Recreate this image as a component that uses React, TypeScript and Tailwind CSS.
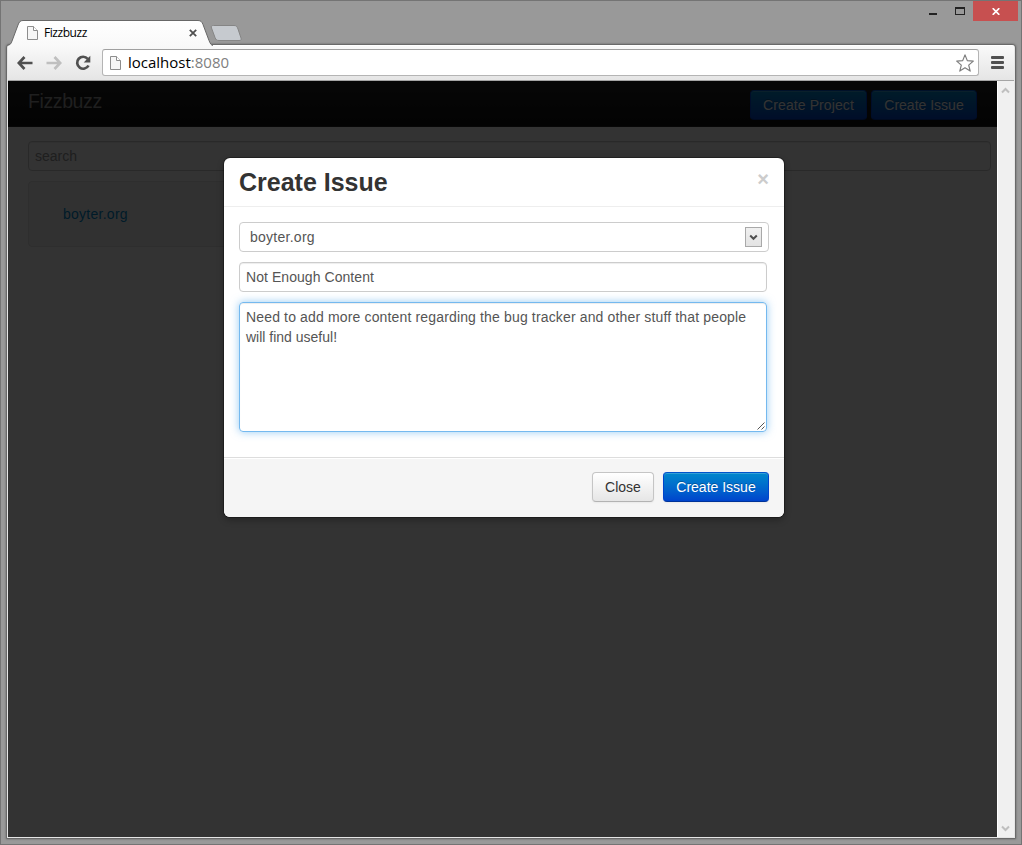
import React from "react";

const primary =
  "h-[30px] rounded-[4px] border border-[#0044cc] border-t-[#0055cc] border-b-[#003399] bg-gradient-to-b from-[#0088cc] to-[#0044cc] text-center text-[14px] leading-[28px] text-white shadow-[inset_0_1px_0_rgba(255,255,255,0.2),0_1px_2px_rgba(0,0,0,0.05)] [text-shadow:0_-1px_0_rgba(0,0,0,0.25)]";

function PageIcon() {
  return (
    <svg width="11" height="14" viewBox="0 0 11 14" className="shrink-0">
      <path d="M.5.5h6l4 4v9H.5z" fill="#f6f6f6" stroke="#8d8d8d" />
      <path d="M6.500.5v4h4" fill="#fff" stroke="#8d8d8d" />
    </svg>
  );
}

function TitleBar() {
  return (
    <header className="flex h-[44px] justify-between">
      <div className="flex pt-[19px] pl-[6px]">
        <div className="relative h-[26px] w-[206px]">
          <svg width="206" height="26" viewBox="0 0 206 26" className="absolute inset-0">
            <defs>
              <linearGradient id="tab" x1="0" y1="0" x2="0" y2="1">
                <stop offset="0" stopColor="#fff" />
                <stop offset="1" stopColor="#f9f9f9" />
              </linearGradient>
            </defs>
            <path
              d="M0 25.500C3 25 4 24 5 21L11 5C12.200 2 13 .5 16 .5H191C194 .5 195 2 196 4.500L202 20.500C203.500 24 204 25 206 25.500V26H0Z"
              fill="url(#tab)"
            />
            <path
              d="M0 25.500C3 25 4 24 5 21L11 5C12.200 2 13 .5 16 .5H191C194 .5 195 2 196 4.500L202 20.500C203.500 24 204 25 206 25.500"
              fill="none"
              stroke="#686868"
            />
          </svg>
          <div className="relative flex h-full items-center pr-[16px] pl-[20px]">
            <PageIcon />
            <span className="ml-[6px] flex-1 font-['Open_Sans',sans-serif] text-[12px] leading-[16px] tracking-[-0.45px] text-black">
              Fizzbuzz
            </span>
            <svg width="8" height="8" viewBox="0 0 8 8">
              <path d="M.8.8l6.400 6.400M7.200.8L.8 7.200" stroke="#505050" strokeWidth="1.800" />
            </svg>
          </div>
        </div>
        <svg width="32" height="17" viewBox="0 0 32 17" className="mt-[5px] -ml-[3px]">
          <path
            d="M3.500.5H24C26.500.5 27 1.500 28 4L31 13C31.700 15 31 15.500 29 15.500H9C7 15.500 6 15 5 12.500L1.500 3C.8 1 1.500.5 3.500.5Z"
            fill="#c6cacf"
            stroke="#858585"
          />
        </svg>
      </div>
      <div className="flex pr-[3px]">
        <span className="mt-[12px] h-[2px] w-[8px] bg-[#222]" />
        <span className="mt-[6px] ml-[18px] h-[8px] w-[10px] border border-t-2 border-[#222]" />
        <span className="ml-[8px] flex h-[20px] w-[45px] items-center justify-center bg-[#c75050]">
          <svg width="8" height="7" viewBox="0 0 8 7">
            <path d="M.7.2l6.600 6.600M7.300.2L.7 6.800" stroke="#fff" strokeWidth="1.700" />
          </svg>
        </span>
      </div>
    </header>
  );
}

function Toolbar() {
  return (
    <div className="flex h-[35px] items-center border-b border-[#a5a5a5] bg-gradient-to-b from-[#f9f9f9] to-[#e5e5e5] pr-[10px] pb-px pl-[9px]">
      <svg width="16" height="14" viewBox="0 0 16 14">
        <path d="M7.500 1L1.800 7l5.700 6M2 7h13.500" fill="none" stroke="#505050" strokeWidth="2.700" />
      </svg>
      <svg width="16" height="14" viewBox="0 0 16 14" className="ml-[13px]">
        <path d="M8.500 1l5.700 6-5.700 6M14 7H.5" fill="none" stroke="#bfbfbf" strokeWidth="2.700" />
      </svg>
      <svg width="16" height="16" viewBox="0 0 16 16" className="ml-[13px]">
        <path d="M12.700 3.800A6 6 0 1 0 13.500 10.500" fill="none" stroke="#505050" strokeWidth="2.700" />
        <path d="M15.300.8v6.700H8.700z" fill="#505050" />
      </svg>
      <div className="ml-[11px] flex h-[27px] flex-1 items-center rounded-[3px] border border-[#b4b4b4] border-t-[#a0a0a0] bg-white pr-[4px] pl-[7px]">
        <PageIcon />
        <span className="ml-[7px] flex-1 pb-[2px] font-['Open_Sans',sans-serif] text-[15px] leading-[22px] text-[#808080]">
          <span className="text-black">localhost</span>:8080
        </span>
        <svg width="18" height="18" viewBox="0 0 18 18">
          <path
            d="M9 .9l2.300 5.700 6 .5-4.600 4 1.500 6L9 13.800l-5.200 3.300 1.500-6-4.600-4 6-.5z"
            fill="#fff"
            stroke="#7d7d7d"
            strokeWidth="1.200"
            strokeLinejoin="round"
          />
        </svg>
      </div>
      <div className="ml-[12px] flex w-[13px] flex-col gap-[2px]">
        <span className="h-[3px] rounded-[1px] bg-[#505050]" />
        <span className="h-[3px] rounded-[1px] bg-[#505050]" />
        <span className="h-[3px] rounded-[1px] bg-[#505050]" />
      </div>
    </div>
  );
}

function Dialog() {
  return (
    <section className="h-[359px] w-[560px] overflow-hidden rounded-[6px] bg-white text-[14px] leading-[20px] text-[#333] shadow-[0_0_0_1px_rgba(0,0,0,0.3),0_3px_7px_rgba(0,0,0,0.3)]">
      <div className="flex h-[49px] justify-between border-b border-[#eee] px-[15px] pt-[9px]">
        <h3 className="text-[25px] leading-[30px] font-bold">Create Issue</h3>
        <span className="mt-[2px] text-[20px] leading-[20px] font-bold text-[#ccc]">×</span>
      </div>
      <div className="h-[250px] px-[15px] pt-[15px] text-[#555]">
        <div className="flex h-[30px] w-[530px] items-center justify-between rounded-[4px] border border-[#ccc] pr-[6px] pl-[10px]">
          <span className="tracking-[0.26px]">boyter.org</span>
          <span className="flex h-[20px] w-[17px] items-center justify-center border border-[#a9a9a9] bg-gradient-to-b from-[#f0f0f0] to-[#e3e3e3]">
            <svg width="9" height="7" viewBox="0 0 9 7">
              <path d="M1.200 1.500l3.300 3.300 3.300-3.300" fill="none" stroke="#505050" strokeWidth="2" />
            </svg>
          </span>
        </div>
        <div className="mt-[10px] h-[30px] w-[528px] rounded-[4px] border border-[#ccc] px-[6px] py-[4px] tracking-[0.06px] shadow-[inset_0_1px_1px_rgba(0,0,0,0.075)]">
          Not Enough Content
        </div>
        <div className="relative mt-[10px] h-[130px] w-[528px] rounded-[4px] border border-[#74b9ef] px-[6px] py-[4px] shadow-[inset_0_1px_1px_rgba(0,0,0,0.075),0_0_8px_rgba(82,168,236,0.6)]">
          <span className="tracking-[0.15px]">
            Need to add more content regarding the bug tracker and other stuff that people
          </span>
          <br />
          will find useful!
          <svg width="8" height="8" viewBox="0 0 8 8" className="absolute right-px bottom-px">
            <path d="M.5 7.500l7-7M4.500 7.500l3-3" stroke="#555" />
          </svg>
        </div>
      </div>
      <div className="flex h-[60px] justify-end gap-[9px] border-t border-[#ddd] bg-[#f5f5f5] px-[15px] pt-[14px] shadow-[inset_0_1px_0_#fff]">
        <button className="h-[30px] w-[62px] rounded-[4px] border border-[#c5c5c5] border-b-[#b3b3b3] bg-gradient-to-b from-white to-[#e6e6e6] text-[14px] leading-[28px] shadow-[inset_0_1px_0_rgba(255,255,255,0.2),0_1px_2px_rgba(0,0,0,0.05)]">
          Close
        </button>
        <button className={`${primary} w-[106px]`}>Create Issue</button>
      </div>
    </section>
  );
}

function Page() {
  return (
    <main className="relative h-full w-[989px] overflow-hidden bg-white font-['Liberation_Sans',Arial,sans-serif] text-[14px] leading-[20px]">
      <nav className="flex h-[46px] justify-between border-b border-[#252525] bg-gradient-to-b from-[#222] to-[#111] pr-[20px] pl-[20px]">
        <span className="pt-[10px] text-[19.500px] leading-[20px] tracking-[-0.4px] text-[#999]">Fizzbuzz</span>
        <div className="flex gap-[4px] pt-[9px]">
          <button className={`${primary} w-[117px] tracking-[0.1px]`}>Create Project</button>
          <button className={`${primary} w-[106px]`}>Create Issue</button>
        </div>
      </nav>
      <div className="px-[20px] pt-[14px]">
        <div className="h-[30px] w-[963px] rounded-[4px] border border-[#ccc] px-[6px] py-[4px] text-[#999] shadow-[inset_0_1px_1px_rgba(0,0,0,0.075)]">
          search
        </div>
        <div className="mt-[10px] h-[66px] w-[300px] rounded-[4px] border border-[#e3e3e3] bg-[#f5f5f5] px-[34px] pt-[22px] tracking-[0.26px] text-[#0088cc]">
          boyter.org
        </div>
      </div>
      <div className="absolute inset-0 bg-black/80" />
      <div className="absolute inset-0 flex items-start pt-[77px] pl-[216px]">
        <Dialog />
      </div>
    </main>
  );
}

export default function App() {
  return (
    <div className="flex h-[845px] w-[1022px] flex-col overflow-hidden border border-[#747474] bg-[#999]">
      <TitleBar />
      <div className="mx-[6px] flex h-[793px] flex-col rounded-t-[3px] border border-[#e5e5e5] border-t-white shadow-[0_0_2px_1px_rgba(60,60,60,0.7)]">
        <Toolbar />
        <div className="flex min-h-0 flex-1">
          <Page />
          <div className="flex flex-1 flex-col items-center justify-between border-l border-white bg-[#f0f0f0] pt-[6px] pr-px pb-[5px]">
            <svg width="9" height="7" viewBox="0 0 9 7">
              <path d="M1 5.500L4.500 2 8 5.500" fill="none" stroke="#bfbfbf" strokeWidth="2" />
            </svg>
            <svg width="9" height="7" viewBox="0 0 9 7">
              <path d="M1 1.500L4.500 5 8 1.500" fill="none" stroke="#bfbfbf" strokeWidth="2" />
            </svg>
          </div>
        </div>
      </div>
    </div>
  );
}
